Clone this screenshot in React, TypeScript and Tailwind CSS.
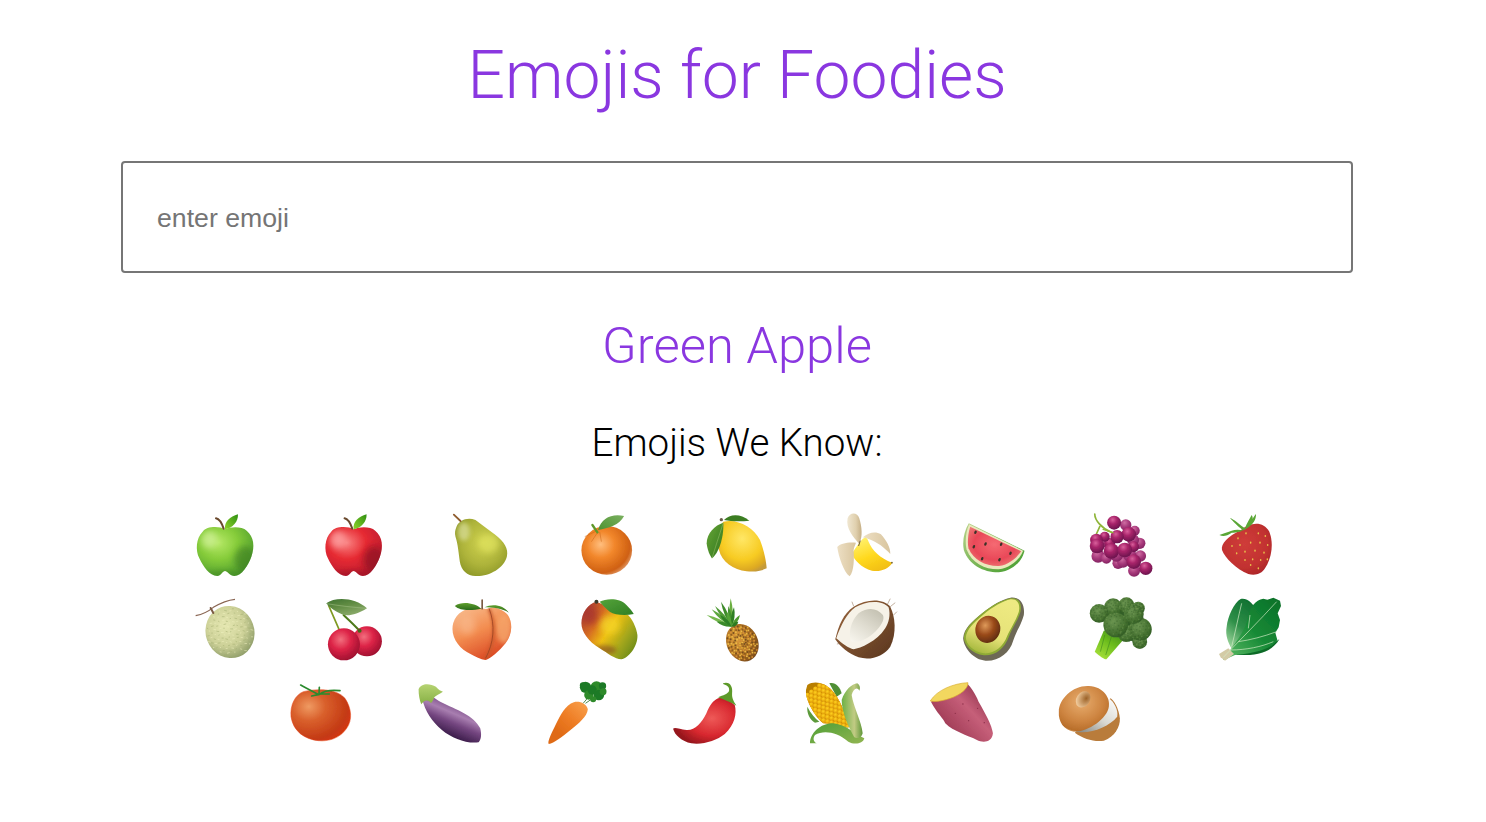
import React from "react";

const Emo = ({ vb, children }: { vb: string; children: React.ReactNode }) => (
  <div className="w-[127.75px] flex justify-center shrink-0">
    <svg className="w-16 h-16 block overflow-visible" viewBox={`${vb} 192 192`}>
      <g filter="url(#s1)">{children}</g>
    </svg>
  </div>
);

const Stops = ({ s }: { s: [number, string][] }) => (
  <>{s.map(([o, c], i) => <stop key={i} offset={o} stopColor={c} />)}</>
);
const RG = ({ id, cx = 0.4, cy = 0.35, r = 0.7, s }: { id: string; cx?: number; cy?: number; r?: number; s: [number, string][] }) => (
  <radialGradient id={id} cx={cx} cy={cy} r={r}><Stops s={s} /></radialGradient>
);
const LG = ({ id, x1 = 0, y1 = 0, x2 = 0, y2 = 1, s }: { id: string; x1?: number; y1?: number; x2?: number; y2?: number; s: [number, string][] }) => (
  <linearGradient id={id} x1={x1} y1={y1} x2={x2} y2={y2}><Stops s={s} /></linearGradient>
);

const APPLE = "M135 88 C118 78 80 78 68 95 C48 115 46 150 58 175 C70 200 88 228 112 228 C122 228 128 213 135 213 C142 213 150 228 163 228 C185 228 205 195 214 170 C225 140 222 110 200 92 C185 78 150 80 135 88Z";

const Apple = ({ id, s, hi, dark }: { id: string; s: [number, string][]; hi: string; dark: string }) => (
  <>
    <defs>
      <RG id={id} cx={0.38} cy={0.32} r={0.75} s={s} />
      <clipPath id={`${id}c`}><path d={APPLE} /></clipPath>
      <LG id={`${id}l`} x1={0} y1={1} x2={1} y2={0} s={[[0, "#8fd42a"], [1, "#2f8f14"]]} />
    </defs>
    <path d={APPLE} fill={`url(#${id})`} />
    <g clipPath={`url(#${id}c)`}>
      <ellipse cx="88" cy="118" rx="24" ry="26" fill={hi} opacity=".75" filter="url(#s10)" />
      <ellipse cx="196" cy="178" rx="32" ry="40" fill={dark} opacity=".6" filter="url(#s10)" />
      <ellipse cx="135" cy="222" rx="60" ry="12" fill={dark} opacity=".35" filter="url(#s6)" />
    </g>
    <path d="M135 88 C132 65 150 50 174 43 C175 65 158 85 135 88Z" fill={`url(#${id}l)`} />
    <path d="M108 55 C118 57 125 68 131 86" stroke="#6b4a2e" strokeWidth="6" strokeLinecap="round" fill="none" />
  </>
);

const Melon = () => {
  const dots: React.ReactNode[] = [];
  for (let i = 0; i < 120; i++) {
    const a = i * 2.399;
    const r = 6.6 * Math.sqrt(i);
    dots.push(<path key={i} d={`M${150 + r * Math.cos(a)} ${396 + r * Math.sin(a)} l${4 + (i % 3) * 2} ${(i % 5) - 2}`} stroke={i % 2 ? "#f0f2bf" : "#a2ad6f"} strokeWidth="2" opacity=".8" />);
  }
  return (
    <>
      <defs>
        <RG id="mel" cx={0.45} cy={0.35} r={0.72} s={[[0, "#e6e8b2"], [0.55, "#cdd198"], [1, "#82925f"]]} />
        <clipPath id="melc"><ellipse cx="150" cy="396" rx="72" ry="78" transform="rotate(-20 150 396)" /></clipPath>
      </defs>
      <ellipse cx="150" cy="396" rx="73" ry="79" transform="rotate(-20 150 396)" fill="url(#mel)" />
      <g clipPath="url(#melc)">{dots}</g>
      <path d="M47 347 C72 342 88 332 100 322 C120 310 145 300 165 298" stroke="#8a6653" strokeWidth="3.5" fill="none" />
      <path d="M92 324 L100 339" stroke="#7d5c45" strokeWidth="6" strokeLinecap="round" />
    </>
  );
};

const Cherries = () => (
  <>
    <defs>
      <RG id="chL" cx={0.4} cy={0.35} r={0.7} s={[[0, "#f26f7e"], [0.45, "#dd2447"], [1, "#9a0e2e"]]} />
      <LG id="chLf" x1={0} y1={0} x2={0.6} y2={1} s={[[0, "#3e7230"], [0.5, "#628d44"], [1, "#8aaa6a"]]} />
    </defs>
    <path d="M445 316 L478 392" stroke="#7f9a22" strokeWidth="5" strokeLinecap="round" />
    <path d="M490 345 C505 360 525 378 540 395" stroke="#4e7a1a" strokeWidth="6" strokeLinecap="round" />
    <circle cx="560" cy="424" r="45" fill="url(#chL)" />
    <circle cx="491" cy="433" r="48" fill="url(#chL)" />
    <circle cx="538" cy="392" r="6" fill="#3f6a18" />
    <path d="M438 310 C465 290 525 292 560 325 C530 345 500 350 485 343 C465 335 450 325 438 310Z" fill="url(#chLf)" />
    <path d="M440 311 C480 318 520 322 558 325" stroke="#a9c48c" strokeWidth="1.5" fill="none" />
  </>
);

const Peach = () => {
  const b = "M905 325 C870 318 830 330 818 370 C808 410 835 445 870 462 C885 470 900 478 915 480 C930 476 955 455 975 430 C995 405 998 370 982 345 C965 325 935 318 925 325 C918 328 912 327 905 325Z";
  return (
    <>
      <defs>
        <LG id="pch" x1={0.2} y1={0} x2={0.7} y2={1} s={[[0, "#f8b98a"], [0.45, "#f38d50"], [1, "#d8421f"]]} />
        <clipPath id="pchc"><path d={b} /></clipPath>
        <LG id="pchl" s={[[0, "#5e9e2c"], [1, "#2a6a1a"]]} />
      </defs>
      <path d={b} fill="url(#pch)" />
      <g clipPath="url(#pchc)">
        <ellipse cx="970" cy="385" rx="22" ry="45" fill="#f5a66c" opacity=".8" filter="url(#s6)" />
        <ellipse cx="860" cy="375" rx="25" ry="30" fill="#fac096" opacity=".5" filter="url(#s10)" />
        <path d="M925 325 C948 375 942 430 915 478" stroke="#c8592c" strokeWidth="10" fill="none" filter="url(#s4)" opacity=".8" />
      </g>
      <path d="M926 326 C945 375 940 430 915 475" stroke="#9c4424" strokeWidth="2.5" fill="none" />
      <path d="M823 318 C845 302 885 310 902 326 C880 330 840 335 823 318Z" fill="url(#pchl)" />
      <path d="M912 322 C935 310 970 315 985 338 C965 325 935 322 912 322Z" fill="url(#pchl)" />
      <path d="M905 300 L905 326" stroke="#7a5a42" strokeWidth="5" strokeLinecap="round" />
    </>
  );
};

const Pear = () => {
  const b = "M828 80 C835 62 860 50 885 60 C905 75 925 90 945 105 C970 125 985 145 979 170 C970 205 925 230 885 228 C860 228 842 210 838 185 C835 165 832 130 825 110 C822 98 824 90 828 80Z";
  return (
    <>
      <defs>
        <RG id="pr" cx={0.52} cy={0.42} r={0.65} s={[[0, "#cfd24f"], [0.6, "#adb33a"], [1, "#8a9526"]]} />
        <clipPath id="prc"><path d={b} /></clipPath>
      </defs>
      <path d={b} fill="url(#pr)" />
      <g clipPath="url(#prc)">
        <ellipse cx="850" cy="95" rx="18" ry="28" fill="#dadf9c" opacity=".7" filter="url(#s6)" />
        <ellipse cx="925" cy="130" rx="30" ry="28" fill="#dfe25e" opacity=".75" filter="url(#s10)" />
      </g>
      <path d="M820 44 L840 63" stroke="#8f5c2e" strokeWidth="5.5" strokeLinecap="round" />
    </>
  );
};

const Orange = () => (
  <>
    <defs>
      <RG id="org" cx={0.38} cy={0.38} r={0.68} s={[[0, "#ffbe7e"], [0.4, "#f2872b"], [0.85, "#cf6012"], [1, "#e09868"]]} />
      <LG id="orgl" x1={0} y1={1} x2={1} y2={0} s={[[0, "#4d9230"], [1, "#7ab060"]]} />
    </defs>
    <ellipse cx="141" cy="151" rx="76" ry="73" fill="url(#org)" />
    <path d="M115 95 L95 125 M120 96 L125 125 M112 92 L75 110" stroke="#c96414" strokeWidth="3" opacity=".5" />
    <path d="M115 90 C125 55 155 40 193 48 C180 75 145 85 115 90Z" fill="url(#orgl)" />
    <path d="M98 75 L113 97" stroke="#5f982c" strokeWidth="7" strokeLinecap="round" />
  </>
);

const Lemon = () => {
  const b = "M490 65 C530 55 580 80 600 120 C612 150 620 190 620 205 C605 212 590 216 560 214 C520 210 485 185 477 150 C470 120 470 85 490 65Z";
  return (
    <>
      <defs>
        <RG id="lem" cx={0.5} cy={0.35} r={0.7} s={[[0, "#ffe766"], [0.6, "#f7cb22"], [0.9, "#dca824"], [1, "#c49a3a"]]} />
        <LG id="leml" x1={0} y1={0} x2={1} y2={1} s={[[0, "#66a636"], [1, "#33761e"]]} />
      </defs>
      <path d={b} fill="url(#lem)" />
      <path d="M492 60 C510 42 540 40 568 62 C545 65 515 65 492 60Z" fill="#3a7d20" />
      <path d="M490 68 C465 75 440 100 440 130 C442 150 450 168 456 175 C475 160 492 115 490 68Z" fill="url(#leml)" />
      <path d="M490 68 C478 105 465 145 456 175" stroke="#9bc36a" strokeWidth="1.5" fill="none" />
      <circle cx="484" cy="59" r="5" fill="#6b5a4a" />
    </>
  );
};

const Banana = () => (
  <>
    <defs>
      <LG id="ban" x1={0.3} y1={0} x2={0.8} y2={1} s={[[0, "#fff06a"], [0.5, "#ffd91f"], [1, "#f0bb10"]]} />
      <LG id="banp" x1={0} y1={0} x2={1} y2={0} s={[[0, "#f0e7d2"], [0.6, "#e0d0ae"], [1, "#c5ae84"]]} />
      <LG id="banq" x1={0} y1={0} x2={1} y2={0} s={[[0, "#eddfc4"], [1, "#d9c59e"]]} />
    </defs>
    <path d="M897 132 C878 110 856 85 862 55 C868 36 892 36 897 55 C905 80 908 110 897 132Z" fill="url(#banp)" />
    <path d="M908 112 C925 98 945 93 962 103 C978 120 992 145 990 162 C975 145 950 125 925 117Z" fill="url(#banq)" />
    <path d="M900 125 C912 108 920 110 925 125 C935 150 960 175 996 188 C985 207 960 216 935 212 C905 205 878 178 876 160 C885 145 893 133 900 125Z" fill="url(#ban)" />
    <path d="M887 128 C860 126 840 131 831 141 C835 170 850 215 868 229 C882 215 882 170 880 150 C882 140 885 135 887 128Z" fill="url(#banq)" />
    <path d="M900 122 L895 138" stroke="#6b5a3a" strokeWidth="3" />
    <circle cx="995" cy="188" r="2.5" fill="#6b5a2a" />
  </>
);

const Mango = () => {
  const b = "M110 305 C85 310 65 340 65 370 C65 395 85 425 120 445 C145 460 165 478 185 478 C205 475 235 440 233 405 C230 380 215 355 205 345 C180 335 145 320 110 305Z";
  return (
    <>
      <defs>
        <LG id="mg" x1={0} y1={0.15} x2={1} y2={0.8} s={[[0, "#a83a35"], [0.28, "#d66d22"], [0.5, "#eec012"], [0.78, "#a0a51c"], [1, "#6a8a18"]]} />
        <clipPath id="mgc"><path d={b} /></clipPath>
        <LG id="mgl" x1={0} y1={0} x2={1} y2={1} s={[[0, "#55a33a"], [1, "#2f7f24"]]} />
      </defs>
      <path d={b} fill="url(#mg)" />
      <g clipPath="url(#mgc)">
        <ellipse cx="150" cy="375" rx="30" ry="28" fill="#f4d52a" opacity=".75" filter="url(#s10)" />
        <ellipse cx="90" cy="345" rx="24" ry="30" fill="#a6312e" opacity=".75" filter="url(#s10)" />
        <ellipse cx="130" cy="450" rx="40" ry="14" fill="#7c3a25" opacity=".55" filter="url(#s6)" />
      </g>
      <path d="M120 305 C140 295 180 293 200 315 C210 325 218 335 222 342 C195 347 165 345 150 335 C138 325 128 315 120 305Z" fill="url(#mgl)" />
      <circle cx="110" cy="305" r="6" fill="#3b3a2a" />
    </>
  );
};

const Pineapple = () => {
  const dots: React.ReactNode[] = [];
  const cols = ["#f0c04a", "#8a5a1f", "#d9923a", "#6f4a1f", "#e6b03c"];
  for (let i = 0; i < 150; i++) {
    const a = i * 2.399;
    const r = Math.sqrt(i / 150);
    const x = 44 * r * Math.cos(a);
    const y = 54 * r * Math.sin(a);
    const t = (-25 * Math.PI) / 180;
    dots.push(<circle key={i} cx={547 + x * Math.cos(t) - y * Math.sin(t)} cy={428 + x * Math.sin(t) + y * Math.cos(t)} r="2.8" fill={cols[i % 5]} opacity=".9" />);
  }
  const tips: [number, number, string][] = [
    [440, 345, "#76b84e"], [455, 328, "#5ba63c"], [465, 318, "#4f9a34"], [483, 305, "#3c8a2a"], [512, 295, "#6aae3f"], [505, 318, "#43922e"], [522, 322, "#2f7f24"], [540, 345, "#4e9a30"], [470, 365, "#3a8a2c"], [500, 335, "#55a338"], [535, 365, "#2e7a22"], [480, 345, "#2f8027"],
  ];
  return (
    <>
      <defs><RG id="pin" cx={0.4} cy={0.35} r={0.7} s={[[0, "#d99c3a"], [0.7, "#a86a20"], [1, "#6e431a"]]} /></defs>
      <ellipse cx="547" cy="428" rx="47" ry="58" transform="rotate(-25 547 428)" fill="url(#pin)" />
      {dots}
      {tips.map(([x, y, c], i) => {
        const bx = 515;
        const by = 380;
        const dx = y - by;
        const dy = bx - x;
        const l = Math.hypot(dx, dy) || 1;
        const w = 10;
        return <path key={i} d={`M${x} ${y} Q${(x + bx) / 2 + (dx / l) * w} ${(y + by) / 2 + (dy / l) * w} ${bx} ${by} Q${(x + bx) / 2 - (dx / l) * w} ${(y + by) / 2 - (dy / l) * w} ${x} ${y}Z`} fill={c} />;
      })}
    </>
  );
};

const Coconut = () => (
  <>
    <defs>
      <LG id="coc" x1={0.2} y1={0.3} x2={0.9} y2={1} s={[[0, "#8a5a35"], [1, "#5c3820"]]} />
      <LG id="coi" x1={0.8} y1={0} x2={0.1} y2={1} s={[[0, "#c4c1b2"], [0.5, "#dfdcd0"], [1, "#f6f4ec"]]} />
    </defs>
    <path d="M990 320 L1005 308 M982 312 L990 296 M880 318 L875 305 M1000 345 L1010 335 M840 430 L830 432" stroke="#a38a70" strokeWidth="2" />
    <path d="M880 320 C920 295 970 295 990 320 C1005 350 1010 400 990 440 C970 470 930 482 895 472 C865 462 840 440 825 418 C835 375 850 340 880 320Z" fill="url(#coc)" />
    <path d="M885 322 C915 303 965 298 985 322 C992 345 985 370 975 385 C950 425 900 445 880 448 C865 445 845 430 828 415 C842 375 860 340 885 322Z" fill="#f6f2e8" />
    <path d="M895 340 C925 320 950 325 968 345 C975 360 960 380 945 395 C925 415 895 430 875 425 C865 415 865 370 895 340Z" fill="url(#coi)" />
  </>
);

const Watermelon = () => (
  <>
    <defs>
      <LG id="wmr" x1={0} y1={0} x2={1} y2={1} s={[[0, "#b8d48a"], [1, "#3f9a2a"]]} />
      <RG id="wmf" cx={0.5} cy={0.45} r={0.65} s={[[0, "#f56a72"], [0.6, "#e94858"], [1, "#ee7f7a"]]} />
    </defs>
    <path d="M115 70 L282 152 C275 185 245 212 205 217 C160 218 115 195 100 150 C95 125 100 95 115 70Z" fill="url(#wmr)" />
    <path d="M116 73 L278 152 C268 178 240 203 205 208 C165 209 125 192 108 148 C103 125 106 95 116 73Z" fill="#eae8bd" />
    <path d="M119 80 L272 154 C258 174 235 194 205 198 C165 199 130 182 114 145 C110 125 113 100 119 80Z" fill="url(#wmf)" />
    {[[135, 97], [165, 132], [212, 133], [130, 140], [155, 176], [207, 179], [240, 160]].map(([x, y], i) => (
      <ellipse key={i} cx={x} cy={y} rx="3.5" ry="5.5" fill="#3a3228" transform={`rotate(25 ${x} ${y})`} />
    ))}
  </>
);

const Grapes = () => {
  const back: [number, number, number][] = [[505, 168, 20], [530, 175, 16], [565, 190, 17], [632, 168, 17], [580, 185, 18], [613, 212, 18], [630, 130, 17], [615, 92, 15], [588, 75, 17], [560, 165, 20], [600, 165, 20], [520, 125, 18], [610, 120, 18]];
  const front: [number, number, number][] = [[648, 205, 20], [612, 185, 22], [612, 140, 16], [540, 130, 16], [525, 110, 15], [500, 120, 19], [553, 68, 21], [597, 103, 22], [562, 110, 20], [502, 138, 22], [545, 153, 23], [585, 150, 22]];
  return (
    <>
      <defs>
        <RG id="gr" cx={0.4} cy={0.3} r={0.75} s={[[0, "#d9609c"], [0.4, "#a8246a"], [1, "#64124a"]]} />
        <RG id="grb" cx={0.4} cy={0.3} r={0.75} s={[[0, "#cf6da2"], [0.5, "#a83a7c"], [1, "#80205f"]]} />
      </defs>
      <path d="M495 42 C495 60 515 85 545 97 M510 80 L500 102" stroke="#8fb53a" strokeWidth="5" fill="none" strokeLinecap="round" />
      {back.map(([x, y, r], i) => <circle key={i} cx={x} cy={y} r={r} fill="url(#grb)" />)}
      {front.map(([x, y, r], i) => <circle key={i} cx={x} cy={y} r={r} fill="url(#gr)" />)}
      <path d="M520 88 L550 98" stroke="#8fb53a" strokeWidth="4" strokeLinecap="round" />
    </>
  );
};

const Strawberry = () => {
  const seeds = [[924, 115], [948, 100], [985, 100], [1006, 108], [906, 138], [930, 135], [962, 128], [990, 128], [1013, 135], [920, 160], [945, 155], [975, 152], [1002, 158], [945, 180], [968, 178], [992, 180], [1012, 178], [962, 195], [985, 205]];
  return (
    <>
      <defs>
        <RG id="st" cx={0.45} cy={0.4} r={0.75} s={[[0, "#cf3c3a"], [0.6, "#c23230"], [0.9, "#aa2428"], [1, "#d86068"]]} />
      </defs>
      <path d="M930 92 C960 65 1000 62 1018 95 C1032 130 1025 175 1005 205 C995 222 975 228 955 222 C920 208 885 175 876 150 C872 130 895 108 930 92Z" fill="url(#st)" />
      {seeds.map(([x, y], i) => <ellipse key={i} cx={x} cy={y} rx="2.4" ry="3.2" fill="#e8c04a" />)}
      <path d="M940 92 C930 85 915 70 900 55 C905 52 930 75 945 85 C950 70 958 58 965 45 C968 50 970 55 965 62 C970 52 975 45 978 42 C978 55 975 65 960 78 C950 88 925 100 905 98 C890 108 880 110 868 105 C880 100 890 97 905 92 C915 88 930 88 940 92Z" fill="#5aa636" />
    </>
  );
};

const Avocado = () => (
  <>
    <defs>
      <LG id="avf" x1={0.7} y1={0} x2={0.3} y2={1} s={[[0, "#eeea82"], [0.65, "#e6e278"], [1, "#a8ba40"]]} />
      <RG id="avp" cx={0.35} cy={0.4} r={0.7} s={[[0, "#df9a5a"], [0.5, "#9a4a1a"], [1, "#5a2a0e"]]} />
    </defs>
    <path d="M240 293 C268 290 284 310 280 345 C272 375 258 392 248 422 C238 458 205 484 165 482 C130 480 100 445 98 415 C100 385 125 365 155 340 C185 315 215 298 240 293Z" fill="#6d6857" />
    <path d="M240 295 C265 292 275 310 270 335 C260 365 245 385 235 410 C222 445 195 468 160 466 C125 462 100 435 100 412 C103 385 125 365 155 340 C185 315 215 300 240 295Z" fill="#8eaa34" />
    <path d="M240 298 C260 296 270 312 265 335 C255 365 240 385 230 408 C218 440 192 462 160 460 C128 456 106 432 106 412 C108 388 130 368 158 344 C187 320 218 303 240 298Z" fill="url(#avf)" />
    <ellipse cx="172" cy="388" rx="37" ry="41" transform="rotate(20 172 388)" fill="url(#avp)" />
  </>
);

const Broccoli = () => {
  const fl: [number, number, number][] = [[550, 322, 27], [590, 316, 24], [625, 325, 20], [508, 340, 28], [590, 400, 26], [630, 425, 22], [632, 388, 34], [612, 342, 30], [558, 375, 37]];
  const dots: React.ReactNode[] = [];
  fl.forEach(([cx, cy, r], k) => {
    for (let i = 0; i < 34; i++) {
      const a = i * 2.399 + k;
      const q = r * 0.96 * Math.sqrt(i / 34);
      dots.push(<circle key={`${k}-${i}`} cx={cx + q * Math.cos(a)} cy={cy + q * Math.sin(a)} r="2.4" fill={i % 3 ? "#315a26" : "#7ea25c"} opacity=".4" />);
    }
  });
  return (
    <>
      <defs>
        <LG id="brs" x1={0.2} y1={1} x2={0.8} y2={0} s={[[0, "#a8e03a"], [0.5, "#6fbf1f"], [1, "#3f8a1f"]]} />
        <RG id="brf" cx={0.4} cy={0.35} r={0.72} s={[[0, "#6a9450"], [0.7, "#44702f"], [1, "#2f5a24"]]} />
      </defs>
      <path d="M522 392 L495 455 C510 470 525 478 530 478 L582 418 L555 385Z" fill="url(#brs)" />
      <path d="M525 405 L512 455 M545 410 L528 465" stroke="#3f8a1f" strokeWidth="3" opacity=".6" />
      <path d="M500 330 L560 310 L630 310 L650 390 L630 435 L580 410 L540 395Z" fill="#335e27" />
      {fl.map(([x, y, r], i) => <circle key={i} cx={x} cy={y} r={r} fill="url(#brf)" />)}
      {dots}
    </>
  );
};

const Lettuce = () => (
  <>
    <defs>
      <LG id="let" x1={0} y1={1} x2={1} y2={0} s={[[0, "#5fbd68"], [0.5, "#178a36"], [1, "#086f28"]]} />
      <LG id="let2" x1={0.2} y1={1} x2={0.7} y2={0} s={[[0, "#9ad49a"], [0.45, "#2e8f48"], [1, "#0e7030"]]} />
    </defs>
    <path d="M915 465 C960 445 1020 440 1048 418 C1030 450 990 468 935 465Z" fill="#0b6a28" />
    <path d="M890 380 C893 350 912 308 932 297 C952 293 972 310 982 340 C978 380 940 420 905 445 C895 430 885 405 890 380Z" fill="url(#let2)" />
    <path d="M880 478 C915 430 945 395 955 350 C962 320 975 300 1000 296 L1012 299 L1030 293 L1050 302 L1053 318 L1043 340 L1050 360 L1046 382 L1036 398 L1042 420 C1025 445 990 458 915 465 C900 470 892 478 880 480Z" fill="url(#let)" />
    <path d="M872 472 L867 462 L895 445 L912 462 L885 482Z" fill="#d3cba6" />
    <path d="M880 472 C930 420 990 360 1040 305 M925 425 C960 420 1000 410 1040 395 M900 450 C950 450 995 440 1030 425 M955 385 L960 345 M905 440 C915 400 925 350 935 310" stroke="#d4ecc6" strokeWidth="2.4" fill="none" opacity=".85" />
  </>
);

const Tomato = () => (
  <>
    <defs>
      <RG id="tom" cx={0.3} cy={0.33} r={0.8} s={[[0, "#ef9a62"], [0.35, "#d9602c"], [0.8, "#c43a14"], [1, "#d8350f"]]} />
    </defs>
    <path d="M100 65 C140 55 200 55 225 85 C245 115 248 150 230 175 C210 205 175 215 145 212 C105 208 70 185 63 140 C60 105 75 75 100 65Z" fill="url(#tom)" stroke="#e8451a" strokeWidth="1.5" />
    <path d="M147 74 C130 65 110 55 92 45 M147 74 L148 52 M150 72 C165 60 190 60 210 62 M145 74 L125 78 M150 72 L178 72" stroke="#2c8a2e" strokeWidth="5" fill="none" strokeLinecap="round" />
  </>
);

const Eggplant = () => (
  <>
    <defs>
      <LG id="egg" x1={0.65} y1={0.15} x2={0.3} y2={0.8} s={[[0, "#6f3f7e"], [0.35, "#a87eb0"], [0.6, "#744680"], [1, "#351844"]]} />
      <LG id="egc" s={[[0, "#b6d372"], [1, "#86b044"]]} />
    </defs>
    <path d="M455 85 C480 65 490 85 510 95 C560 120 610 135 630 175 C635 195 632 210 625 217 C590 222 545 205 515 180 C485 155 465 125 455 85Z" fill="url(#egg)" />
    <path d="M445 58 C452 38 480 40 497 50 C505 60 512 62 518 65 C506 73 498 75 492 82 C489 92 485 96 482 100 C478 92 472 90 466 92 C460 94 456 98 453 103 C448 90 445 75 445 58Z" fill="url(#egc)" />
  </>
);

const Carrot = () => {
  const g = [[945, 52, 17], [978, 52, 18], [996, 48, 11], [955, 75, 14], [985, 75, 16], [998, 65, 10], [937, 46, 9], [968, 88, 9], [965, 60, 14]];
  return (
    <>
      <defs><LG id="car" x1={0.9} y1={0.1} x2={0.3} y2={0.8} s={[[0, "#f79a45"], [0.5, "#ee7d25"], [1, "#df6a15"]]} /></defs>
      <path d="M938 100 L965 68 M945 100 L985 72 M950 70 L938 50" stroke="#4f8a4a" strokeWidth="3" />
      {g.map(([x, y, r], i) => <circle key={i} cx={x} cy={y} r={r} fill={i % 2 ? "#2f8a2c" : "#1f7a26"} />)}
      <path d="M910 97 C925 92 948 100 952 118 C950 140 925 160 900 180 C875 200 850 220 835 222 C830 218 840 195 855 165 C870 135 885 105 910 97Z" fill="url(#car)" />
    </>
  );
};

const Chili = () => (
  <>
    <defs>
      <RG id="chi" cx={0.62} cy={0.45} r={0.62} s={[[0, "#ee5a58"], [0.6, "#d8282f"], [1, "#96161d"]]} />
    </defs>
    <path d="M175 85 C190 78 210 90 225 105 C232 130 225 165 195 192 C170 212 130 225 95 220 C65 213 45 195 40 176 C45 170 60 178 80 180 C105 182 125 160 140 130 C150 105 160 92 175 85Z" fill="url(#chi)" />
    <path d="M190 40 C210 33 220 50 217 70 C216 85 222 95 230 107 C215 97 195 90 175 82 C190 75 205 72 208 62 C210 50 200 45 190 42Z" fill="#5d9a2a" />
  </>
);

const Corn = () => {
  const k: React.ReactNode[] = [];
  for (let r = -2; r < 16; r++) {
    for (let c = -6; c < 14; c++) {
      const u = c * 17 + (r % 2 ? 8.5 : 0);
      const v = r * 11;
      const x = 250 + u * 0.72 + v * 0.55;
      const y = 50 - u * 0.55 + v * 0.72 + 60;
      k.push(<circle key={`${r}-${c}`} cx={x} cy={y} r="7.5" fill="url(#cok)" />);
    }
  }
  return (
    <>
      <defs>
        <RG id="cok" cx={0.4} cy={0.35} r={0.7} s={[[0, "#ffd21f"], [1, "#d98f00"]]} />
        <LG id="coh" x1={0} y1={0} x2={1} y2={1} s={[[0, "#4f9f36"], [1, "#92b552"]]} />
        <LG id="cohr" x1={0} y1={0} x2={1} y2={0} s={[[0, "#6cb044"], [0.6, "#c2cb84"], [1, "#5f9638"]]} />
        <clipPath id="cobc"><path d="M262 45 C285 30 315 40 335 60 C360 85 375 130 388 172 C370 175 345 160 310 160 C285 140 255 90 258 60Z" /></clipPath>
      </defs>
      <path d="M328 40 C345 35 360 50 365 70 L350 80Z" fill="#4f8f34" />
      <path d="M262 110 C272 130 285 145 298 155 L285 158 C270 150 260 130 262 110Z" fill="#5c9a3a" />
      <path d="M262 45 C285 30 315 40 335 60 C360 85 375 130 388 172 C370 175 345 160 310 160 C285 140 255 90 258 60Z" fill="#b97f04" />
      <g clipPath="url(#cobc)">{k}</g>
      <path d="M270 220 C270 190 300 160 340 160 C380 165 410 195 433 205 C428 224 400 224 385 215 C350 185 310 180 285 195 C278 205 280 215 290 220Z" fill="url(#coh)" />
      <path d="M365 90 C375 60 395 42 412 40 C420 45 422 55 418 62 C412 50 400 55 395 75 C400 110 425 155 428 190 C425 205 410 208 402 200 C385 170 365 125 365 90Z" fill="url(#cohr)" />
    </>
  );
};

const Yam = () => (
  <>
    <defs>
      <LG id="yam" x1={0.9} y1={0.2} x2={0.2} y2={0.8} s={[[0, "#94354f"], [0.4, "#c65f79"], [1, "#9c3852"]]} />
    </defs>
    <path d="M632 95 C650 130 670 145 675 160 C700 185 740 195 770 210 C785 218 815 220 818 190 C815 165 795 130 775 95 C765 70 750 50 740 40Z" fill="url(#yam)" />
    <path d="M630 93 C650 60 700 40 743 38 C745 55 720 75 690 85 C670 92 645 97 630 93Z" fill="#f2d75e" stroke="#d9ae2e" strokeWidth="2" />
    {[[728, 102], [772, 115], [745, 152], [792, 158], [705, 130]].map(([x, y], i) => <circle key={i} cx={x} cy={y} r="2" fill="#8a2f48" />)}
  </>
);

const Bagel = () => (
  <>
    <defs>
      <RG id="bag" cx={0.45} cy={0.35} r={0.72} s={[[0, "#e8ad6e"], [0.6, "#cd8440"], [0.88, "#b86e2a"], [1, "#f3d6ad"]]} />
      <RG id="bgh" cx={0.65} cy={0.35} r={0.7} s={[[0, "#9c6228"], [1, "#f2cd9f"]]} />
      <LG id="bgc" x1={0} y1={1} x2={1} y2={0} s={[[0, "#7c7c76"], [0.5, "#d8d8d2"], [1, "#ffffff"]]} />
    </defs>
    <path d="M1063 188 C1090 207 1120 216 1150 212 C1182 202 1200 170 1198 145 C1195 115 1180 90 1170 85Z" fill="#b97b3a" />
    <path d="M1062 183 C1100 196 1165 172 1190 140 C1194 120 1180 95 1165 85 L1060 175Z" fill="url(#bgc)" />
    <path d="M1015 125 C1015 85 1060 45 1105 48 C1150 50 1170 85 1165 110 C1160 145 1105 185 1060 185 C1030 180 1013 155 1015 125Z" fill="url(#bag)" />
    <ellipse cx="1088" cy="88" rx="20" ry="26" transform="rotate(35 1088 88)" fill="url(#bgh)" />
  </>
);

export default function App() {
  return (
    <div className="w-[1474px] flex flex-col items-center bg-white font-['Roboto',sans-serif] pb-[77px]">
      <svg className="absolute w-0 h-0" aria-hidden="true">
        <defs>
          <filter id="s1" x="-10%" y="-10%" width="120%" height="120%"><feGaussianBlur stdDeviation="1.4" /></filter>
          <filter id="s2" x="-50%" y="-50%" width="200%" height="200%"><feGaussianBlur stdDeviation="2" /></filter>
          <filter id="s4" x="-50%" y="-50%" width="200%" height="200%"><feGaussianBlur stdDeviation="4" /></filter>
          <filter id="s6" x="-50%" y="-50%" width="200%" height="200%"><feGaussianBlur stdDeviation="6" /></filter>
          <filter id="s10" x="-60%" y="-60%" width="220%" height="220%"><feGaussianBlur stdDeviation="10" /></filter>
        </defs>
      </svg>
      <h1 className="mt-[36px] text-[66px] leading-[79px] font-light text-[#8a37e0]">Emojis for Foodies</h1>
      <input
        placeholder="enter emoji"
        className="mt-[46px] w-[1232px] h-[112px] border-2 border-[#767676] rounded-[4px] pl-[34px] pt-[2px] text-[26.67px] font-['Liberation_Sans',sans-serif] placeholder:text-[#757575] outline-none"
      />
      <div className="mt-[43px] text-[50.75px] leading-[59px] font-light text-[#8a37e0]">Green Apple</div>
      <h2 className="mt-[45px] text-[38.5px] leading-[45px] font-light text-black">Emojis We Know:</h2>
      <div className="mt-[48px] flex flex-col gap-5">
        <div className="flex justify-center">
          <Emo vb="42 39"><Apple id="ga" hi="#d2f29a" dark="#3a7a20" s={[[0, "#b5e866"], [0.45, "#86cc3a"], [1, "#4a9a2c"]]} /></Emo>
          <Emo vb="425.25 39"><g transform="translate(385 0)"><Apple id="ra" hi="#ffa8a8" dark="#801024" s={[[0, "#f98080"], [0.45, "#e62a32"], [1, "#b81a2e"]]} /></g></Emo>
          <Emo vb="808.5 39"><Pear /></Emo>
          <Emo vb="51.75 39"><Orange /></Emo>
          <Emo vb="435 39"><Lemon /></Emo>
          <Emo vb="818.25 39"><Banana /></Emo>
          <Emo vb="91.5 39"><Watermelon /></Emo>
          <Emo vb="474.75 39"><Grapes /></Emo>
          <Emo vb="858 39"><Strawberry /></Emo>
        </div>
        <div className="flex justify-center">
          <Emo vb="42 291"><Melon /></Emo>
          <Emo vb="425.25 291"><Cherries /></Emo>
          <Emo vb="808.5 291"><Peach /></Emo>
          <Emo vb="51.75 291"><Mango /></Emo>
          <Emo vb="435 291"><Pineapple /></Emo>
          <Emo vb="818.25 291"><Coconut /></Emo>
          <Emo vb="91.5 291"><Avocado /></Emo>
          <Emo vb="474.75 291"><Broccoli /></Emo>
          <Emo vb="858 291"><Lettuce /></Emo>
        </div>
        <div className="flex justify-center pr-[65.5px]">
          <Emo vb="57 33"><Tomato /></Emo>
          <Emo vb="440.25 33"><Eggplant /></Emo>
          <Emo vb="823.5 33"><Carrot /></Emo>
          <Emo vb="36.75 33"><Chili /></Emo>
          <Emo vb="240 33"><Corn /></Emo>
          <Emo vb="623.25 33"><Yam /></Emo>
          <Emo vb="1006.5 33"><Bagel /></Emo>
        </div>
      </div>
    </div>
  );
}
